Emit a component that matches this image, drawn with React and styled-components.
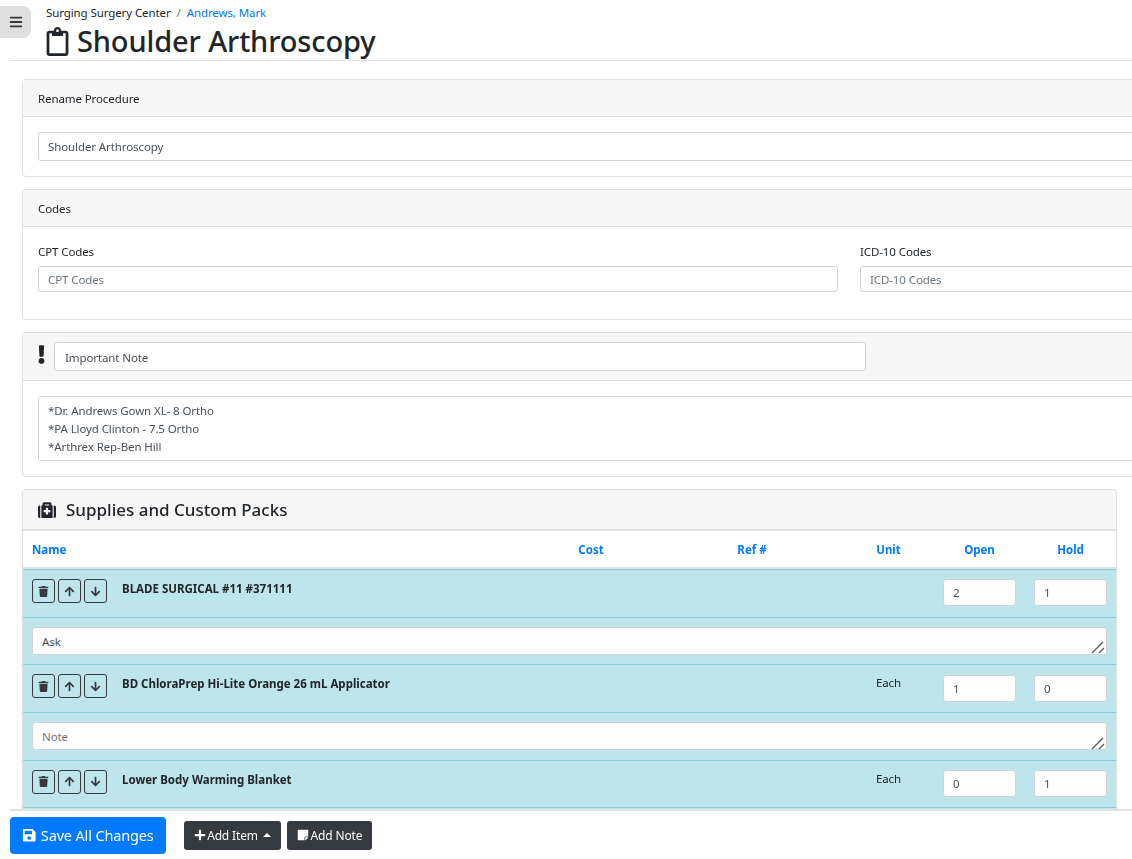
import React from "react";
import styled, { createGlobalStyle } from "styled-components";
import { FaBars, FaRegClipboard, FaExclamation, FaMedkit, FaTrash, FaArrowUp, FaArrowDown, FaSave, FaPlus, FaStickyNote } from "react-icons/fa";

const GlobalStyle = createGlobalStyle`
	html, body {
		margin: 0;
		height: 100%;
		overflow: hidden;
	}
	body {
		font-family: "Noto Sans", "Open Sans", sans-serif;
		font-size: 11.5px;
		letter-spacing: -0.1px;
		color: #212529;
		background: #fff;
	}
	* {
		box-sizing: border-box;
	}
`;

const Page = styled.div`
	position: relative;
	display: flex;
	flex-direction: column;
	width: 1132px;
	height: 859px;
	overflow: hidden;
`;

const SidebarToggle = styled.button`
	position: absolute;
	top: 6px;
	left: 0;
	width: 31px;
	height: 32px;
	border: none;
	border-radius: 0 8px 8px 0;
	background: #e0e0e0;
	color: #343a40;
	font-size: 14px;
	display: flex;
	align-items: center;
	justify-content: center;
	padding: 0;
`;

const Header = styled.header`
	height: 61px;
	flex: none;
	margin-left: 10px;
	padding: 5px 0 0 36px;
	border-bottom: 1px solid #dee2e6;
`;

const Breadcrumb = styled.div`
	display: flex;
	gap: 6px;
	line-height: 16px;
	a {
		color: #007bff;
		text-decoration: none;
	}
	span {
		color: #6c757d;
	}
`;

const Title = styled.h1`
	margin: 0;
	display: flex;
	align-items: center;
	gap: 5px;
	font-size: 29px;
	font-weight: 500;
	letter-spacing: -0.13px;
	line-height: 40px;
	svg {
		font-size: 29px;
		margin-left: -3px;
	}
`;

const Main = styled.main`
	flex: 1;
	min-height: 0;
	overflow: hidden;
	padding: 18px 0 0 22px;
`;

const Card = styled.section`
	width: ${(props) => props.$width || 1130}px;
	border: 1px solid #dfdfdf;
	border-radius: 4px;
	margin-bottom: 12px;
	background: #fff;
`;

const CardHeader = styled.div`
	height: 37px;
	display: flex;
	align-items: center;
	padding: 0 15px;
	background: #f7f7f7;
	border-bottom: 1px solid #dfdfdf;
	border-radius: 3px 3px 0 0;
`;

const NoteHeader = styled(CardHeader)`
	height: 48px;
	gap: 9px;
	svg {
		width: 7px;
		height: 19px;
		margin-bottom: 4px;
	}
	input {
		padding: 1px 10px 0;
	}
`;

const SuppliesHeader = styled(CardHeader)`
	height: 41px;
	gap: 10px;
	border-bottom-width: 2px;
	font-size: 17px;
	font-weight: 500;
	letter-spacing: 0;
	svg {
		font-size: 18px;
	}
`;

const CardBody = styled.div`
	padding: 15px;
`;

const CodesBody = styled(CardBody)`
	display: grid;
	grid-template-columns: 800px 1fr;
	column-gap: 22px;
	padding: 16px 15px 27px;
`;

const Field = styled.label`
	display: flex;
	flex-direction: column;
	gap: 5px;
	line-height: 18px;
`;

const TextInput = styled.input`
	display: block;
	width: ${(props) => props.$width || "100%"};
	height: ${(props) => props.$height || 29}px;
	padding: 0 9px;
	font: inherit;
	letter-spacing: inherit;
	color: #495057;
	background: #fff;
	border: 1px solid #ced4da;
	border-radius: 3px;
	&::placeholder {
		color: #6c757d;
	}
`;

const TextArea = styled.textarea`
	display: block;
	width: 100%;
	height: ${(props) => props.$height || 28}px;
	padding: 5px 9px;
	font: inherit;
	letter-spacing: inherit;
	line-height: 18px;
	color: #495057;
	background: #fff;
	border: 1px solid #ced4da;
	border-radius: 3px;
	resize: none;
	&::placeholder {
		color: #6c757d;
	}
`;

const columns = "498px 140px 182px 91px 91px 91px";

const TableHead = styled.div`
	display: grid;
	grid-template-columns: ${columns};
	height: 38px;
	align-items: center;
	color: #007bff;
	font-weight: 700;
	letter-spacing: 0;
	border-bottom: 2px solid #dee2e6;
`;

const HeadCell = styled.div`
	padding: 0 9px;
	text-align: ${(props) => (props.$left ? "left" : "center")};
`;

const ItemRow = styled.div`
	display: grid;
	grid-template-columns: ${columns};
	height: 47.67px;
	padding-top: 9px;
	background: #bee5eb;
	border-top: 1px solid #86cfda;
`;

const NoteRow = styled.div`
	position: relative;
	height: 47.67px;
	padding: 9px;
	background: #bee5eb;
	border-top: 1px solid #86cfda;
`;

const ResizeGrip = styled.svg`
	position: absolute;
	right: 11px;
	bottom: 10px;
	width: 14px;
	height: 14px;
	stroke: #555;
	stroke-width: 1.3;
	fill: none;
	pointer-events: none;
`;

const NameCell = styled.div`
	display: flex;
	gap: 3px;
	padding-left: 9px;
	font-weight: 700;
	letter-spacing: 0;
	line-height: 20px;
`;

const ItemName = styled.div`
	margin-left: 12px;
	white-space: nowrap;
`;

const UnitCell = styled.div`
	text-align: center;
	line-height: 16px;
	padding-top: 1px;
`;

const QtyCell = styled.div`
	padding: 0.3px 9px 0;
`;

const QtyInput = styled.input`
	display: block;
	width: 73px;
	height: 27px;
	padding: 0 9px;
	font: inherit;
	color: #495057;
	background: #fff;
	border: 1px solid #ced4da;
	border-radius: 3px;
`;

const IconButton = styled.button`
	width: 23px;
	height: 24px;
	padding: 0;
	display: flex;
	align-items: center;
	justify-content: center;
	font-size: 11px;
	color: #343a40;
	background: transparent;
	border: 1px solid #343a40;
	border-radius: 3px;
`;

const Footer = styled.footer`
	flex: none;
	height: 50px;
	margin-left: 10px;
	display: flex;
	align-items: center;
	border-top: 2px solid #e2e2e2;
`;

const SaveButton = styled.button`
	width: 156px;
	height: 37px;
	margin-right: 18px;
	display: flex;
	align-items: center;
	justify-content: center;
	gap: 4px;
	font: inherit;
	font-size: 14.5px;
	letter-spacing: -0.15px;
	color: #fff;
	background: #007bff;
	border: none;
	border-radius: 4px;
`;

const DarkButton = styled.button`
	height: 29px;
	width: ${(props) => props.$width}px;
	margin-right: 6px;
	display: flex;
	align-items: center;
	justify-content: center;
	gap: 2px;
	font: inherit;
	font-size: 12px;
	letter-spacing: -0.15px;
	color: #fff;
	background: #343a40;
	border: none;
	border-radius: 3px;
`;

const PlusIcon = styled(FaPlus)`
	margin-right: -1px;
`;

const CaretUp = styled.span`
	width: 0;
	height: 0;
	margin-left: 3px;
	border-left: 4px solid transparent;
	border-right: 4px solid transparent;
	border-bottom: 4px solid #fff;
`;

const items = [
	{ name: "BLADE SURGICAL #11 #371111", unit: "", open: 2, hold: 1, note: "Ask" },
	{ name: "BD ChloraPrep Hi-Lite Orange 26 mL Applicator", unit: "Each", open: 1, hold: 0, note: "" },
	{ name: "Lower Body Warming Blanket", unit: "Each", open: 0, hold: 1, note: "" },
];

function Item({ item }) {
	return (
		<>
			<ItemRow>
				<NameCell>
					<IconButton><FaTrash /></IconButton>
					<IconButton><FaArrowUp /></IconButton>
					<IconButton><FaArrowDown /></IconButton>
					<ItemName>{item.name}</ItemName>
				</NameCell>
				<div />
				<div />
				<UnitCell>{item.unit}</UnitCell>
				<QtyCell><QtyInput defaultValue={item.open} /></QtyCell>
				<QtyCell><QtyInput defaultValue={item.hold} /></QtyCell>
			</ItemRow>
			<NoteRow>
				<TextArea placeholder="Note" defaultValue={item.note} />
				<ResizeGrip viewBox="0 0 14 14">
					<path d="M1 13 L12 2 M8 13 L13 8" />
				</ResizeGrip>
			</NoteRow>
		</>
	);
}

export default function App() {
	return (
		<Page>
			<GlobalStyle />
			<Header>
				<Breadcrumb>
					Surging Surgery Center <span>/</span> <a href="#">Andrews, Mark</a>
				</Breadcrumb>
				<Title><FaRegClipboard /> Shoulder Arthroscopy</Title>
			</Header>
			<SidebarToggle><FaBars /></SidebarToggle>
			<Main>
				<Card>
					<CardHeader>Rename Procedure</CardHeader>
					<CardBody>
						<TextInput defaultValue="Shoulder Arthroscopy" />
					</CardBody>
				</Card>
				<Card>
					<CardHeader>Codes</CardHeader>
					<CodesBody>
						<Field>
							CPT Codes
							<TextInput placeholder="CPT Codes" $height={26} />
						</Field>
						<Field>
							ICD-10 Codes
							<TextInput placeholder="ICD-10 Codes" $height={26} />
						</Field>
					</CodesBody>
				</Card>
				<Card>
					<NoteHeader>
						<FaExclamation />
						<TextInput defaultValue="Important Note" $width="812px" />
					</NoteHeader>
					<CardBody>
						<TextArea
							$height={65}
							defaultValue={"*Dr. Andrews Gown XL- 8 Ortho\n*PA Lloyd Clinton - 7.5 Ortho\n*Arthrex Rep-Ben Hill"}
						/>
					</CardBody>
				</Card>
				<Card $width={1095}>
					<SuppliesHeader>
						<FaMedkit />
						Supplies and Custom Packs
					</SuppliesHeader>
					<TableHead>
						<HeadCell $left>Name</HeadCell>
						<HeadCell>Cost</HeadCell>
						<HeadCell>Ref #</HeadCell>
						<HeadCell>Unit</HeadCell>
						<HeadCell>Open</HeadCell>
						<HeadCell>Hold</HeadCell>
					</TableHead>
					{items.map((item) => (
						<Item key={item.name} item={item} />
					))}
				</Card>
			</Main>
			<Footer>
				<SaveButton><FaSave /> Save All Changes</SaveButton>
				<DarkButton $width={97}><PlusIcon /> Add Item <CaretUp /></DarkButton>
				<DarkButton $width={85}><FaStickyNote /> Add Note</DarkButton>
			</Footer>
		</Page>
	);
}
